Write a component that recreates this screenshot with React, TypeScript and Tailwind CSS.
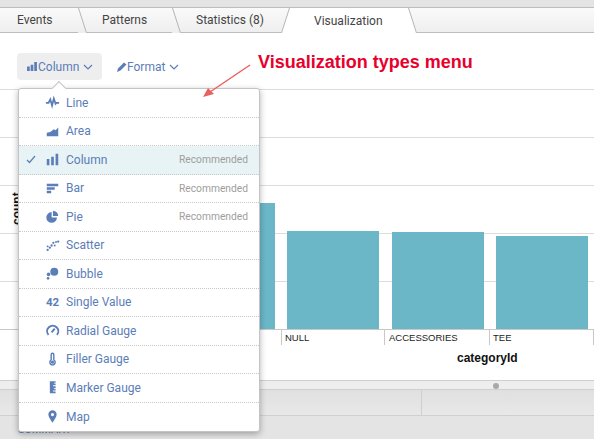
import React from "react"

const blue = "#5b7db8"

const icons: Record<string, React.ReactNode> = {
  Line: <path d="M1 9h3l2-4 2 7 2-8 2 6 1-1h3" fill="none" stroke={blue} strokeWidth="2" />,
  Area: <path d="M2 14V10l4-1 4-3 2 1 3-3v10z" fill={blue} />,
  Column: <path d="M2 8h3v7H2zM7 5.500h3V15H7zM12 2h3v13h-3z" fill={blue} />,
  Bar: <path d="M2 3h13v3H2zM2 7h9v3H2zM2 11h5v3H2z" fill={blue} />,
  Pie: <path d="M7.500 3.500a6 6 0 1 0 6 6h-6zM9 2v6h6a6 6 0 0 0-6-6z" fill={blue} />,
  Scatter: (
    <g fill={blue}>
      <circle cx="3" cy="13.500" r="1.300" />
      <circle cx="5.500" cy="11" r="1.300" />
      <circle cx="3" cy="9.500" r="1.100" />
      <circle cx="7.500" cy="8.500" r="1.300" />
      <circle cx="9.500" cy="5.500" r="1.300" />
      <circle cx="11" cy="8.500" r="1.100" />
      <circle cx="15" cy="4" r="1.300" />
      <circle cx="12.500" cy="4.500" r="1.100" />
    </g>
  ),
  Bubble: (
    <g fill={blue}>
      <circle cx="10.500" cy="6.500" r="4.500" />
      <circle cx="4" cy="9.500" r="2" />
      <circle cx="3.500" cy="14" r="1.500" />
    </g>
  ),
  Radial: (
    <g fill="none" stroke={blue} strokeWidth="2.200">
      <path d="M4 13.500a6.300 6.300 0 1 1 9.500 0" />
      <path d="M7.500 10.500l3.500-4" />
    </g>
  ),
  Filler: (
    <g fill="none" stroke={blue} strokeWidth="1.600">
      <path d="M7 9V3a1.500 1.500 0 0 1 3 0v6a3 3 0 1 1-3 0z" />
      <circle cx="8.500" cy="11.500" r="1" fill={blue} />
    </g>
  ),
  Marker: <path d="M5.500 1.500H12v1.500h-2v1h2v2h-3v1h3v2h-2v1h2v2h-3v1h3v2H5.500z" fill={blue} />,
  Map: <path fillRule="evenodd" d="M8.500 1.500a4.700 4.700 0 0 1 4.700 4.700c0 2.800-2.800 6.300-4.700 9.300-1.900-3-4.700-6.500-4.700-9.300a4.700 4.700 0 0 1 4.700-4.700zm0 3a1.800 1.800 0 1 0 0 3.600 1.800 1.800 0 0 0 0-3.600z" fill={blue} />,
}

const rows = [
  { label: "Line", icon: "Line" },
  { label: "Area", icon: "Area" },
  { label: "Column", icon: "Column", selected: true, recommended: true },
  { label: "Bar", icon: "Bar", recommended: true },
  { label: "Pie", icon: "Pie", recommended: true },
  { label: "Scatter", icon: "Scatter" },
  { label: "Bubble", icon: "Bubble" },
  { label: "Single Value", text: "42" },
  { label: "Radial Gauge", icon: "Radial" },
  { label: "Filler Gauge", icon: "Filler" },
  { label: "Marker Gauge", icon: "Marker" },
  { label: "Map", icon: "Map" },
]

function Chevron() {
  return (
    <svg width="10" height="6" viewBox="0 0 10 6" className="ml-1">
      <path d="M1 1l4 4 4-4" fill="none" stroke={blue} strokeWidth="1.200" />
    </svg>
  )
}

function Slant() {
  return (
    <svg width="9" height="25" viewBox="0 0 9 25" className="shrink-0">
      <path d="M0.500 0L8.500 25" stroke="#b5b5b5" fill="none" />
    </svg>
  )
}

function VizMenu() {
  return (
    <div className="absolute left-[18px] top-[88px] w-[242px] h-[344px] bg-white rounded-[3px] border border-[#c4c4c4] shadow-[0_2px_6px_rgba(0,0,0,0.3)] flex flex-col z-10">
      <div className="absolute left-[35px] -top-[6px] w-[10px] h-[10px] rotate-45 bg-white border-l border-t border-[#c4c4c4]" />
      {rows.map((r, i) => (
        <div
          key={r.label}
          className={`relative flex items-center h-[28.5px] pl-[7px] pr-[11px] text-[12px] text-[#5b7db8] ${i < rows.length - 1 ? "border-b border-dotted border-[#c8c8c8]" : ""} ${r.selected ? "bg-[#e8f3f5]" : ""}`}
        >
          <span className="w-[18px] shrink-0">
            {r.selected && (
              <svg width="10" height="9" viewBox="0 0 10 9">
                <path d="M1 5l2.500 2.500L9 1" fill="none" stroke={blue} strokeWidth="1.200" />
              </svg>
            )}
          </span>
          <span className="w-[19px] shrink-0 flex items-center justify-center -translate-x-[1px]">
            {r.text ? (
              <span className="font-bold text-[11.500px]">{r.text}</span>
            ) : (
              <svg width="15" height="15" viewBox="0 0 17 17">
                {icons[r.icon as string]}
              </svg>
            )}
          </span>
          <span className="ml-[3px]">{r.label}</span>
          {r.recommended && <span className="ml-auto text-[10.250px] text-[#9e9e9e]">Recommended</span>}
        </div>
      ))}
    </div>
  )
}

function Chart() {
  const label = { fontFamily: "'Liberation Sans', sans-serif", fontSize: 9.500, fill: "#222" }
  return (
    <svg width="594" height="291" viewBox="0 0 594 291" className="block">
      {[0, 48, 96, 144, 192].map((y) => (
        <line key={y} x1="0" x2="594" y1={y + 0.5} y2={y + 0.5} stroke="#dcdcdc" />
      ))}
      <rect x="140" y="114" width="135" height="126" fill="#6bb7c8" />
      <rect x="287" y="142" width="92" height="98" fill="#6bb7c8" />
      <rect x="392" y="143" width="92" height="97" fill="#6bb7c8" />
      <rect x="496" y="147" width="92" height="93" fill="#6bb7c8" />
      <line x1="0" x2="594" y1="240.500" y2="240.500" stroke="#c8c8c8" />
      {[281, 384, 489, 593].map((x) => (
        <line key={x} x1={x + 0.5} x2={x + 0.5} y1="240" y2="256" stroke="#c8c8c8" />
      ))}
      <text x="285" y="252" style={label}>NULL</text>
      <text x="389" y="252" style={label}>ACCESSORIES</text>
      <text x="493" y="252" style={label}>TEE</text>
      <text x="457" y="273" style={{ ...label, fontSize: 12, fontWeight: 700, fill: "#111" }}>categoryId</text>
      <text transform="translate(21 136) rotate(-90)" style={{ ...label, fontSize: 12, fontWeight: 700, fill: "#111" }}>count</text>
    </svg>
  )
}

export default function App() {
  return (
    <div className="relative w-[594px] h-[439px] overflow-hidden flex flex-col bg-[#e4e4e4] font-['Roboto',sans-serif]">
      <div className="h-[8px] shrink-0 border-b border-[#bdbdbd]" />
      <div className="flex h-[25px] shrink-0 text-[12px] text-[#444] bg-gradient-to-b from-[#fafafa] to-[#eeeeee]">
        <div className="w-[78px] flex items-center pl-[17px] border-b border-[#bdbdbd]">Events</div>
        <Slant />
        <div className="w-[85px] flex items-center pl-[15px] border-b border-[#bdbdbd]">Patterns</div>
        <Slant />
        <div className="w-[100px] flex items-center pl-[15px] border-b border-[#bdbdbd]">Statistics (8)</div>
        <svg width="9" height="25" viewBox="0 0 9 25" className="shrink-0">
          <path d="M0 25L9 25 9 0z" fill="#fff" />
          <path d="M0.500 25L8.500 0" stroke="#b5b5b5" fill="none" />
        </svg>
        <div className="w-[118px] flex items-center pl-[24px] bg-white">Visualization</div>
        <svg width="9" height="25" viewBox="0 0 9 25" className="shrink-0">
          <path d="M0 0L9 25 0 25z" fill="#fff" />
          <path d="M0.500 0L8.500 25" stroke="#b5b5b5" fill="none" />
        </svg>
        <div className="flex-1 border-b border-[#bdbdbd]" />
      </div>

      <div className="bg-white h-[347px] shrink-0 flex flex-col">
        <div className="h-[56px] shrink-0 flex items-start pt-[20px] pl-[17px] text-[12px] text-[#5b7db8]">
          <div className="h-[27px] w-[85px] rounded-[4px] bg-[#eeeeee] flex items-center pl-[10px]">
            <svg width="10" height="9" viewBox="0 0 11 10" className="mr-[1px]">
              <path d="M0 5h3v5H0zM4 3h3v7H4zM8 0h3v10H8z" fill={blue} />
            </svg>
            Column
            <Chevron />
          </div>
          <div className="h-[27px] ml-[15px] flex items-center">
            <svg width="10" height="10" viewBox="0 0 10 10">
              <path d="M0 10l1-3.500 6-6 2.500 2-6 6z" fill={blue} />
            </svg>
            Format
            <Chevron />
          </div>
        </div>
        <Chart />
      </div>

      <div className="h-[10px] shrink-0 bg-[#eeeeee] border-t border-b border-[#cfcfcf] flex items-center justify-center pl-[398px]">
        <div className="w-[6px] h-[6px] mt-[2px] rounded-full bg-[#a8a8a8]" />
      </div>
      <div className="h-[26px] shrink-0 flex border-b border-[#cfcfcf] bg-gradient-to-b from-[#e0e0e0] to-[#e8e8e8]">
        <div className="w-[422px] border-r border-[#cfcfcf]" />
      </div>
      <div className="flex-1 pl-[18px] pt-[7px] text-[11px] leading-[14px] text-[#5b7db8]">SUMMARY</div>

      <VizMenu />

      <div className="absolute left-[258px] top-[50px] text-[18px] leading-[24px] font-bold text-[#e8002d] font-['Liberation_Sans',sans-serif] z-20">
        Visualization types menu
      </div>
      <svg width="60" height="45" viewBox="0 0 60 45" className="absolute left-[198px] top-[58px] z-20">
        <path d="M52 7L12 34" stroke="#e8615f" strokeWidth="1.500" fill="none" />
        <path d="M5 39L10 30 16 36z" fill="#e8615f" />
      </svg>
    </div>
  )
}
